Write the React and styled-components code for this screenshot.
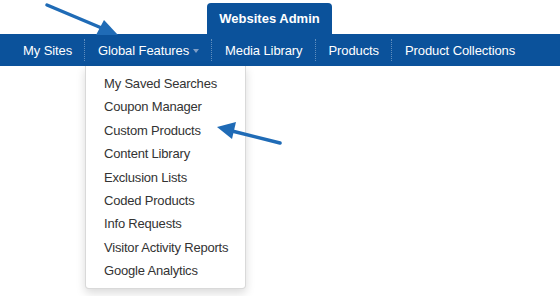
import React from 'react';
import styled, { createGlobalStyle } from 'styled-components';

const Global = createGlobalStyle`
  body {
    margin: 0;
    background: #fff;
    font-family: 'Liberation Sans', Arial, sans-serif;
  }
`;

const Page = styled.div`
  position: relative;
  width: 560px;
  height: 296px;
  padding-top: 3px;
  box-sizing: border-box;
`;

const TabRow = styled.div`
  display: flex;
  padding-left: 207px;
`;

const Tab = styled.div`
  width: 125px;
  height: 31px;
  background: #0b529b;
  border-radius: 4px 4px 0 0;
  color: #fff;
  font-weight: bold;
  font-size: 13px;
  display: flex;
  align-items: center;
  justify-content: center;
  padding-bottom: 1px;
  box-sizing: border-box;
`;

const NavBar = styled.ul`
  display: flex;
  margin: 0;
  padding: 0 0 0 10px;
  list-style: none;
  height: 32px;
  background: #0b529b;
`;

const NavItem = styled.li`
  position: relative;
  display: flex;
  align-items: center;
  padding: 0 13px;
  color: #fff;
  font-size: 13px;
  letter-spacing: -0.1px;
  &::before {
    content: '';
    display: ${(p) => (p.$first ? 'none' : 'block')};
    position: absolute;
    left: -1px;
    top: 5px;
    bottom: 5px;
    border-left: 1px dotted rgba(255, 255, 255, 0.35);
  }
`;

const Caret = styled.span`
  display: inline-block;
  margin-left: 4px;
  margin-top: 1px;
  border-top: 4px solid #7f9fc8;
  border-left: 3.5px solid transparent;
  border-right: 3.5px solid transparent;
`;

const Dropdown = styled.ul`
  position: absolute;
  top: 100%;
  left: 0;
  width: 161px;
  margin: 0;
  padding: 6px 0 5px;
  list-style: none;
  background: #fff;
  border: 1px solid rgba(0, 0, 0, 0.15);
  border-top: none;
  border-radius: 0 0 4px 4px;
  box-shadow: 0 4px 10px rgba(0, 0, 0, 0.15);
  box-sizing: border-box;
  z-index: 2;
`;

const DropItem = styled.li`
  height: 23.4px;
  line-height: 23.4px;
  padding-left: 18px;
  color: #333;
  font-size: 13px;
  letter-spacing: -0.2px;
  white-space: nowrap;
`;

const Arrows = styled.svg`
  position: absolute;
  left: 0;
  top: 0;
  pointer-events: none;
  z-index: 3;
`;

const features = [
  'My Saved Searches',
  'Coupon Manager',
  'Custom Products',
  'Content Library',
  'Exclusion Lists',
  'Coded Products',
  'Info Requests',
  'Visitor Activity Reports',
  'Google Analytics',
];

export default function App() {
  return (
    <Page>
      <Global />
      <TabRow>
        <Tab>Websites Admin</Tab>
      </TabRow>
      <NavBar>
        <NavItem $first>My Sites</NavItem>
        <NavItem>
          Global Features
          <Caret />
          <Dropdown>
            {features.map((f) => (
              <DropItem key={f}>{f}</DropItem>
            ))}
          </Dropdown>
        </NavItem>
        <NavItem>Media Library</NavItem>
        <NavItem>Products</NavItem>
        <NavItem>Product Collections</NavItem>
      </NavBar>
      <Arrows width="560" height="296" viewBox="0 0 560 296">
        <g fill="#1f6bb6" stroke="#1f6bb6">
          <line x1="47" y1="5" x2="104" y2="29" strokeWidth="3.5" strokeLinecap="round" />
          <polygon points="118,35 96,35 104,20" stroke="none" />
          <line x1="280" y1="143" x2="232" y2="131" strokeWidth="3.5" strokeLinecap="round" />
          <polygon points="217,127 236,122 232,139" stroke="none" />
        </g>
      </Arrows>
    </Page>
  );
}
